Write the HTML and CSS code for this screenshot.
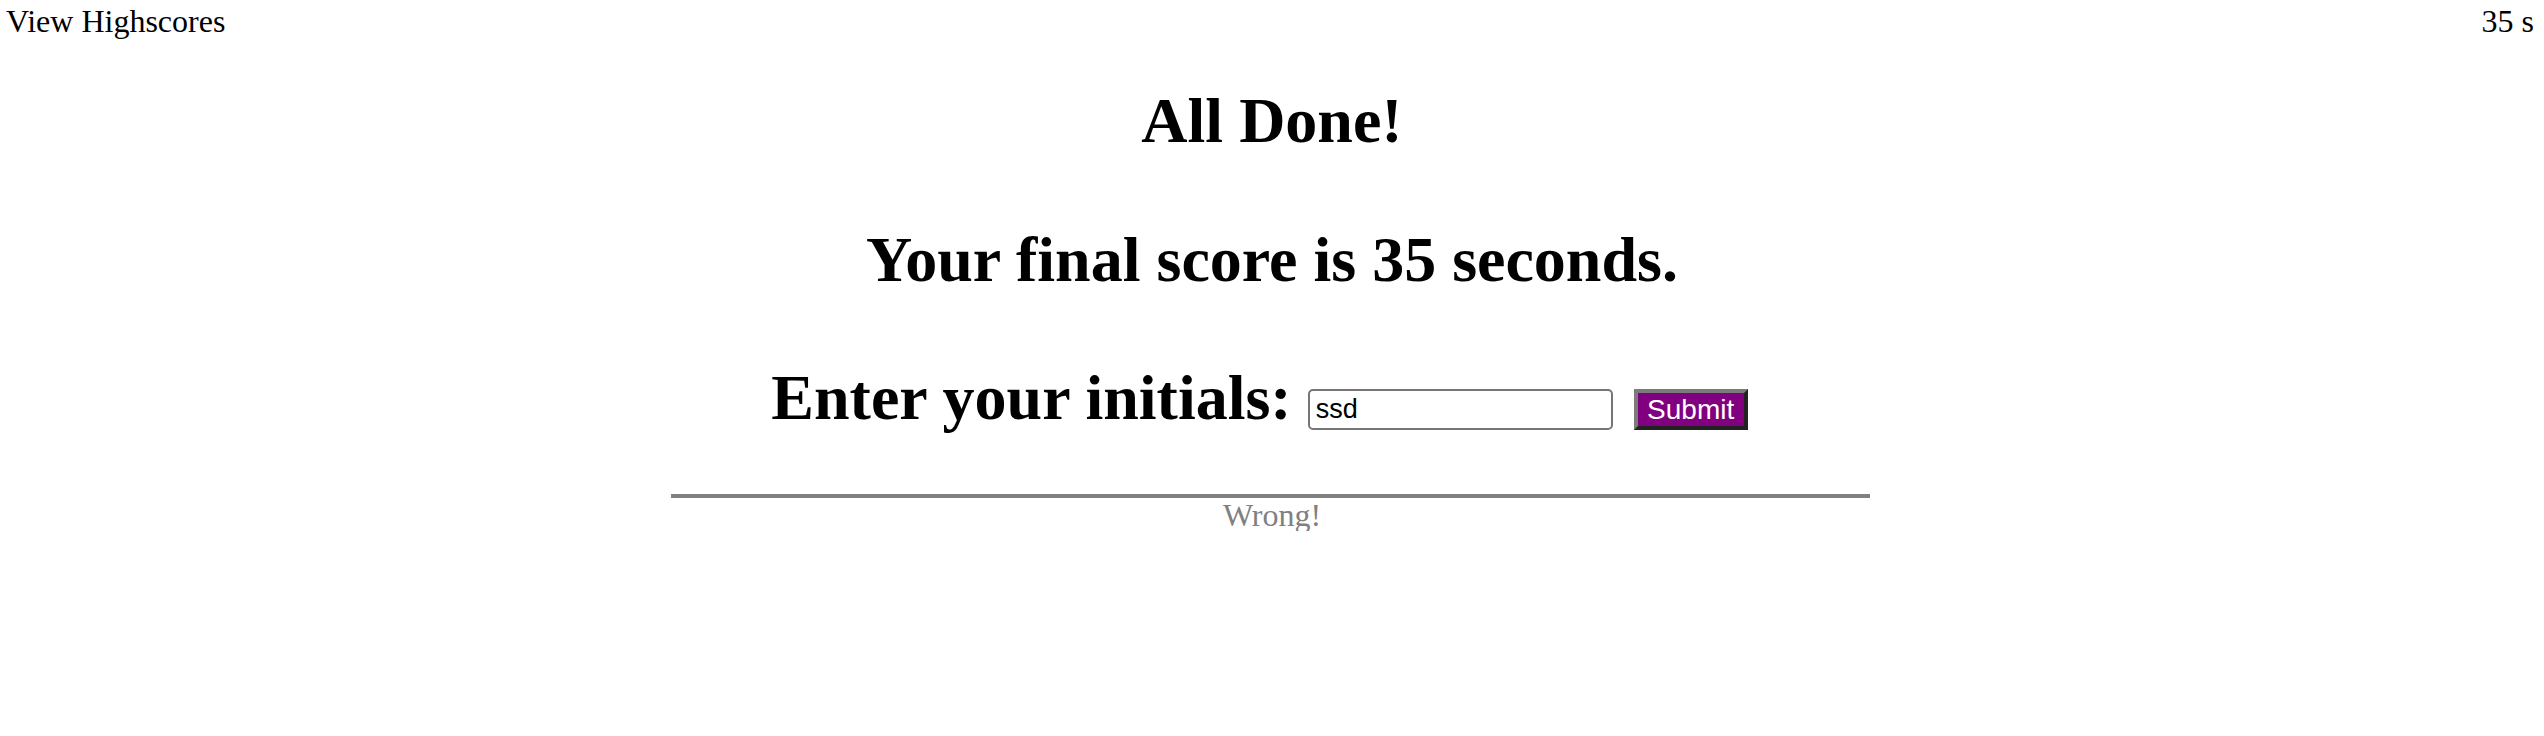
FILE: index.html
```html
<!DOCTYPE html>
<html lang="en">
<head>
<meta charset="utf-8">
<title>Quiz - All Done</title>
<link rel="stylesheet" href="styles.css">
</head>
<body>
  <header class="topbar">
    <a class="highscores-link">View Highscores</a>
    <span class="timer">35 s</span>
  </header>
  <main class="done">
    <h1 class="title">All Done!</h1>
    <h1 class="score">Your final score is 35 seconds.</h1>
    <form class="initials-row">
      <h1 class="initials-label">Enter your initials:</h1>
      <input class="initials-input" type="text" value="ssd">
      <button class="submit-btn" type="button">Submit</button>
    </form>
    <hr class="divider">
    <p class="feedback">Wrong!</p>
  </main>
</body>
</html>
```

FILE: styles.css
```css
html, body {
  margin: 0;
  padding: 0;
  background: #ffffff;
}

body {
  font-family: "Liberation Serif", "Times New Roman", serif;
  color: #000000;
  width: 2544px;
}

.topbar {
  display: flex;
  justify-content: space-between;
  align-items: flex-start;
  padding: 1px 10px 0 6px;
  height: 40px;
  font-size: 32px;
  line-height: 40px;
}

.highscores-link {
  color: #000000;
  text-decoration: none;
}

.done {
  display: flex;
  flex-direction: column;
  align-items: center;
}

.title,
.score,
.initials-label {
  margin: 0;
  font-size: 64px;
  line-height: 74px;
  font-weight: bold;
  white-space: nowrap;
}

.title {
  margin-top: 43px;
}

.score {
  margin-top: 65px;
}

.initials-row {
  display: flex;
  align-items: flex-start;
  margin: 64px 0 0 0;
  padding-right: 25px;
  height: 74px;
}

.initials-input {
  box-sizing: border-box;
  width: 305px;
  height: 41px;
  margin: 28px 0 0 16px;
  padding: 0 6px;
  border: 2px solid #767676;
  border-radius: 5px;
  font-family: "Liberation Sans", Arial, sans-serif;
  font-size: 27px;
  color: #000000;
  background: #ffffff;
  outline: none;
}

.submit-btn {
  box-sizing: border-box;
  width: 114px;
  height: 41px;
  margin: 28px 0 0 21px;
  padding: 0;
  border-style: solid;
  border-width: 4px;
  border-color: #7b7b7b #222222 #222222 #7b7b7b;
  background: #800080;
  color: #ffffff;
  font-family: "Liberation Sans", Arial, sans-serif;
  font-size: 28px;
  line-height: 33px;
}

.divider {
  box-sizing: border-box;
  width: 1199px;
  height: 4px;
  margin: 59px 0 0 -3px;
  border: 0;
  background: #808080;
}

.feedback {
  margin: 1px 0 0 0;
  font-size: 32px;
  line-height: 32px;
  color: #808080;
}
```
